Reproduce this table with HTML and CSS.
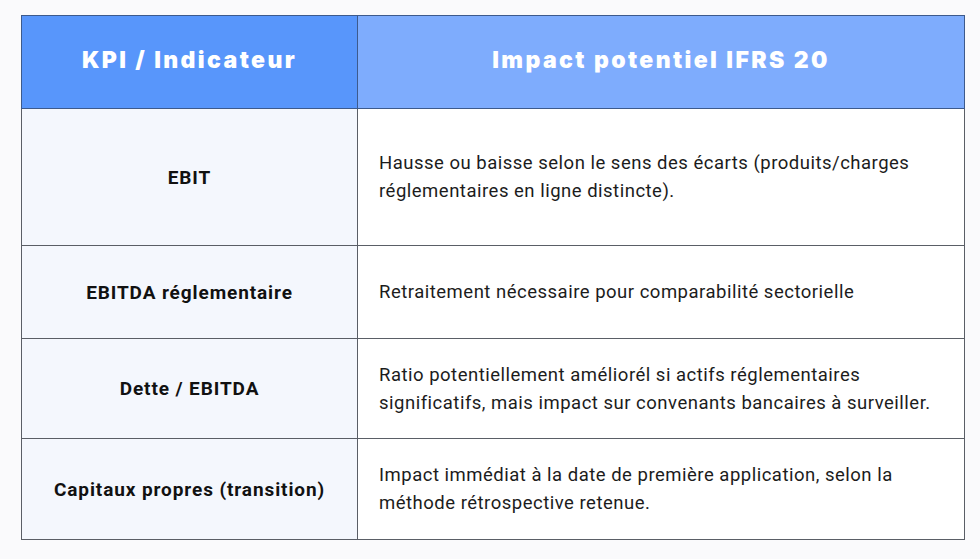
FILE: index.html
```html
<!DOCTYPE html>
<html lang="fr">
<head>
<meta charset="utf-8">
<link rel="stylesheet" href="styles.css">
</head>
<body>
<table class="kpi">
  <colgroup><col class="c1"><col class="c2"></colgroup>
  <thead>
    <tr class="h">
      <th class="h-left">KPI / Indicateur</th>
      <th class="h-right">Impact potentiel IFRS 20</th>
    </tr>
  </thead>
  <tbody>
    <tr class="r1">
      <td class="name">EBIT</td>
      <td class="desc">Hausse ou baisse selon le sens des écarts (produits/charges réglementaires en ligne distincte).</td>
    </tr>
    <tr class="r2">
      <td class="name">EBITDA réglementaire</td>
      <td class="desc">Retraitement nécessaire pour comparabilité sectorielle</td>
    </tr>
    <tr class="r3">
      <td class="name">Dette / EBITDA</td>
      <td class="desc">Ratio potentiellement amélioré​l si actifs réglementaires significatifs, mais impact sur convenants bancaires à surveiller.</td>
    </tr>
    <tr class="r4">
      <td class="name">Capitaux propres (transition)</td>
      <td class="desc">Impact immédiat à la date de première application, selon la méthode rétrospective retenue.</td>
    </tr>
  </tbody>
</table>
</body>
</html>
```
FILE: styles.css
```css
html, body {
  margin: 0;
  padding: 0;
  background: #fafafc;
}
body {
  padding: 15px 0 0 21px;
  font-family: Roboto, "Liberation Sans", sans-serif;
}
.kpi {
  border-collapse: collapse;
  width: 944px;
  table-layout: fixed;
}
.c1 { width: 336px; }
.kpi th, .kpi td {
  border: 1px solid #5a5e66;
}
.kpi th {
  color: #ffffff;
  font-family: Inter, Roboto, sans-serif;
  font-weight: 900;
  font-size: 23px;
  letter-spacing: 2.4px;
  text-align: center;
  height: 88px;
  padding: 0 0 4px 0;
  border-color: #3d5a8c;
}
.h-left { background: #5896fb; }
.h-right { background: #7eacfd; }
.name {
  background: #f4f7fd;
  text-align: center;
  font-weight: 700;
  font-size: 19px;
  letter-spacing: 0.9px;
  color: #111;
  padding: 0;
}
.desc {
  background: #ffffff;
  color: #1c1c1c;
  font-size: 18.5px;
  letter-spacing: 0.5px;
  line-height: 28px;
  padding: 0 16px 0 21px;
}
.r1 td { height: 136px; }
.r2 td { height: 92px; }
.r3 td { height: 99px; }
.r4 td { height: 100px; }
```
